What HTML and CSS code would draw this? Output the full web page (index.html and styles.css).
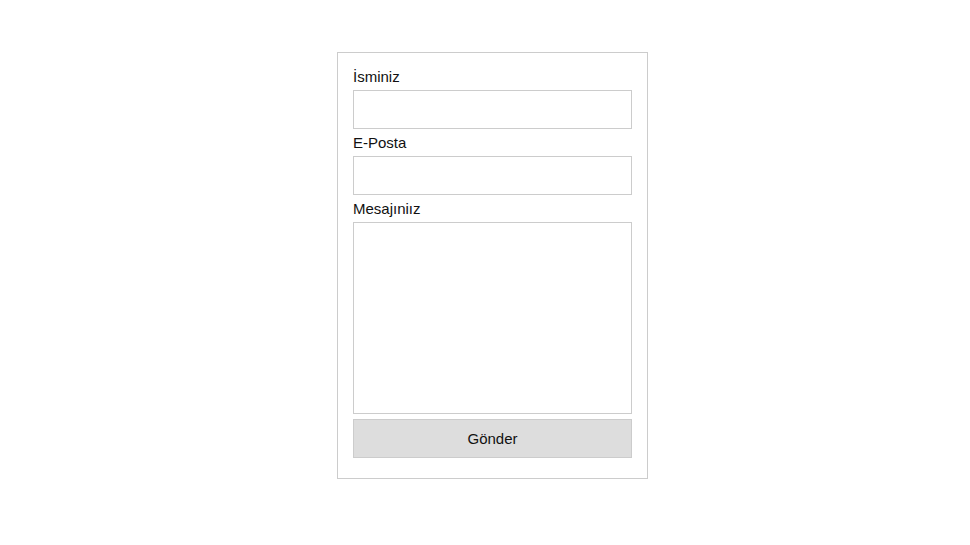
FILE: index.html
```html
<!DOCTYPE html>
<html lang="tr">
<head>
<meta charset="utf-8">
<title>İletişim</title>
<link rel="stylesheet" href="styles.css">
</head>
<body>
<form class="contact-form">
  <label class="field-label" for="name">İsminiz</label>
  <input class="field-input" id="name" type="text">
  <label class="field-label" for="email">E-Posta</label>
  <input class="field-input" id="email" type="text">
  <label class="field-label" for="msg">Mesajıniız</label>
  <textarea class="field-textarea" id="msg"></textarea>
  <button class="submit-btn" type="button">Gönder</button>
</form>
</body>
</html>
```
FILE: styles.css
```css
html, body {
  margin: 0;
  padding: 0;
  background: #fff;
}
body {
  font-family: "Liberation Sans", Arial, sans-serif;
  font-size: 15px;
  color: #111;
  padding-top: 52px;
}
.contact-form {
  box-sizing: border-box;
  width: 311px;
  margin: 0 auto 0 337px;
  border: 1px solid #ccc;
  padding: 15px;
  display: flex;
  flex-direction: column;
}
.field-label {
  display: block;
  line-height: 17px;
  height: 17px;
  margin-bottom: 5px;
}
.field-input,
.field-textarea,
.submit-btn {
  box-sizing: border-box;
  width: 279px;
  margin: 0 0 5px 0;
  border: 1px solid #ccc;
  background: #fff;
  font-family: "Liberation Sans", Arial, sans-serif;
  font-size: 15px;
  padding: 0 8px;
  outline: none;
}
.field-input {
  height: 39px;
}
.field-textarea {
  height: 192px;
  resize: none;
  display: block;
}
.submit-btn {
  height: 39px;
  background: #ddd;
  color: #111;
  cursor: pointer;
}
```
